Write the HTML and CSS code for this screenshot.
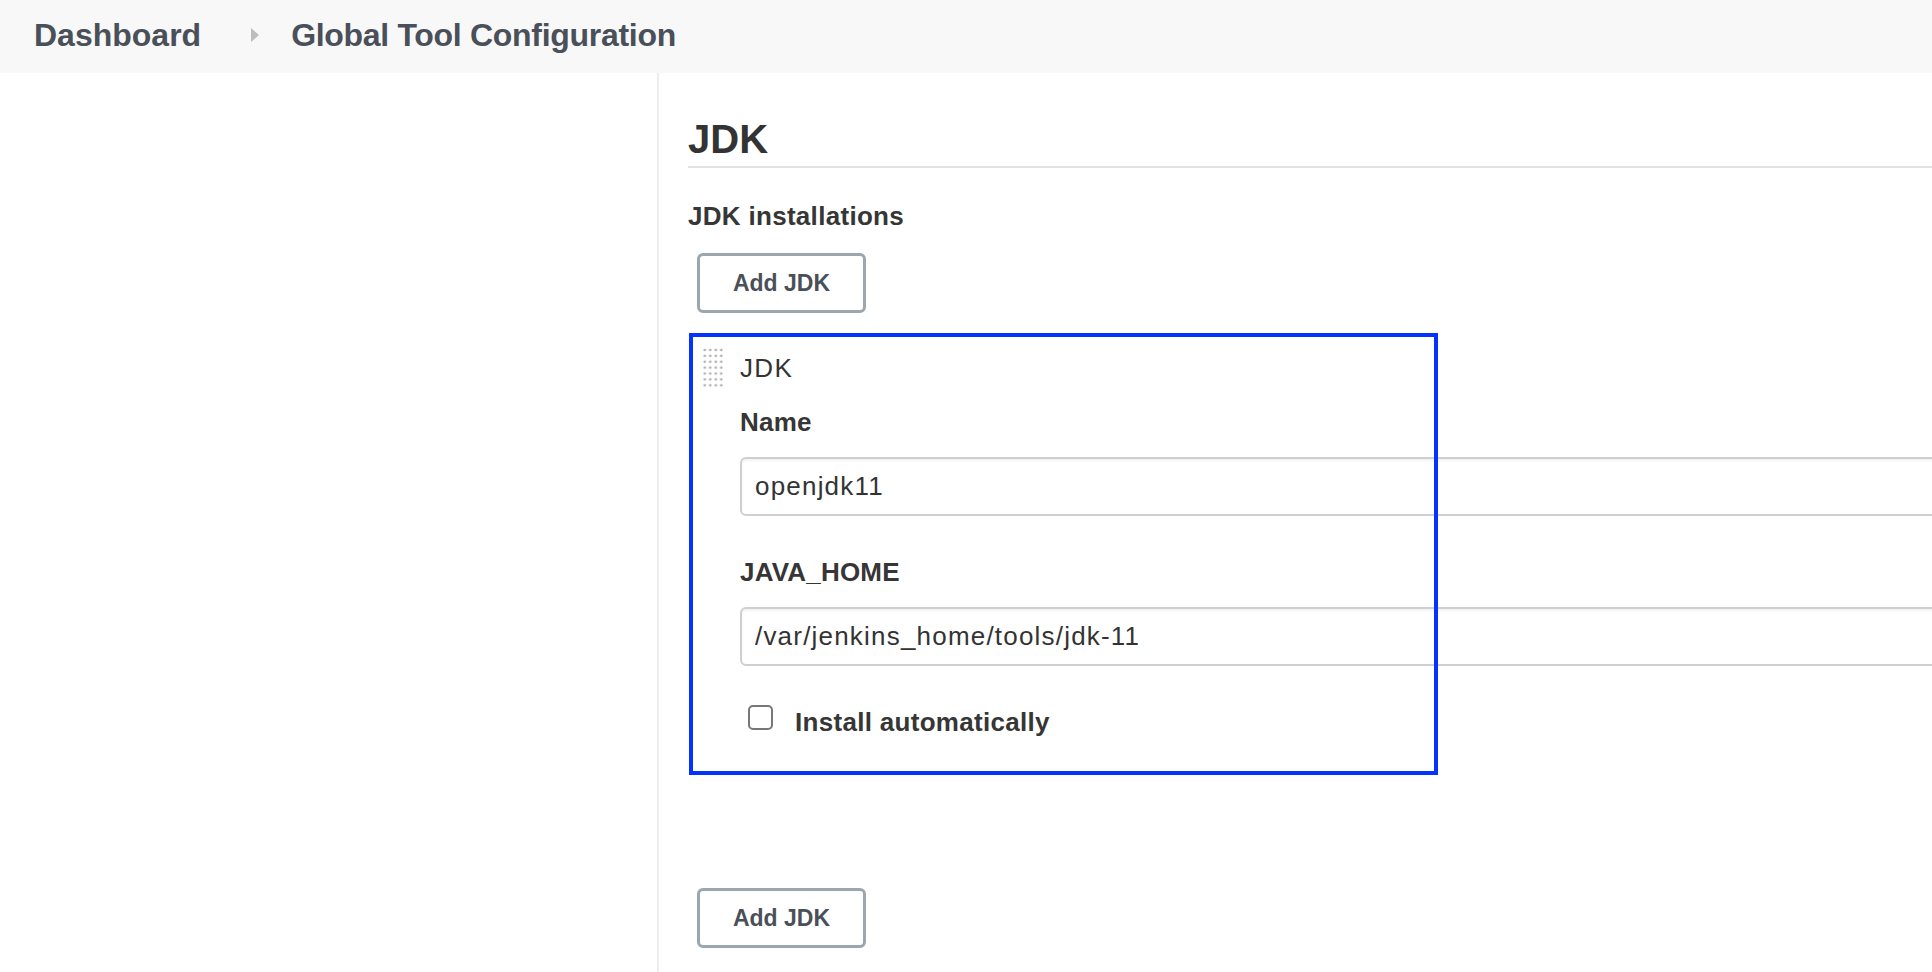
FILE: index.html
```html
<!DOCTYPE html>
<html lang="en">
<head>
<meta charset="utf-8">
<title>Global Tool Configuration</title>
<link rel="stylesheet" href="styles.css">
</head>
<body>
<header class="topbar">
  <span class="crumb">Dashboard</span>
  <span class="crumb-sep"></span>
  <span class="crumb crumb-current">Global Tool Configuration</span>
</header>
<div class="page">
  <aside class="side"></aside>
  <main class="content">
    <h2 class="section-title">JDK</h2>
    <div class="field-label">JDK installations</div>
    <button class="btn" type="button">Add JDK</button>
    <div class="chunk">
      <div class="handle"></div>
      <div class="chunk-body">
        <div class="chunk-title">JDK</div>
        <div class="label">Name</div>
        <input class="text-input" type="text" value="openjdk11">
        <div class="label label-spaced">JAVA_HOME</div>
        <input class="text-input" type="text" value="/var/jenkins_home/tools/jdk-11">
        <label class="check-row">
          <input class="cb" type="checkbox">
          <span class="check-text">Install automatically</span>
        </label>
      </div>
    </div>
    <button class="btn btn-bottom" type="button">Add JDK</button>
    <div class="help">List of JDK installations on this system</div>
  </main>
</div>
</body>
</html>
```

FILE: styles.css
```css
html, body {
  margin: 0;
  padding: 0;
}
body {
  background: #ffffff;
  font-family: "Liberation Sans", Arial, Helvetica, sans-serif;
  color: #333333;
  overflow: hidden;
  height: 972px;
}

.topbar {
  box-sizing: border-box;
  height: 73px;
  padding: 0 0 3px 34px;
  background: #f8f8f8;
  display: flex;
  align-items: center;
}
.crumb {
  font-size: 32px;
  line-height: 40px;
  font-weight: bold;
  color: #4a5059;
}
.crumb-current {
  letter-spacing: -0.3px;
}
.crumb-sep {
  width: 0;
  height: 0;
  border-left: 8px solid #bdbdbd;
  border-top: 7px solid transparent;
  border-bottom: 7px solid transparent;
  margin: 0 32px 0 50px;
}

.page {
  display: flex;
  height: 899px;
}
.side {
  flex: 0 0 657px;
  border-right: 2px solid #e9edf0;
}
.content {
  flex: 1;
  min-width: 0;
  padding-left: 29px;
}

.section-title {
  margin: 46px 0 0;
  padding-bottom: 7px;
  font-size: 40px;
  line-height: 40px;
  font-weight: bold;
  color: #333333;
  border-bottom: 2px solid #e2e2e2;
}

.field-label {
  margin-top: 32px;
  font-size: 26px;
  line-height: 32px;
  font-weight: bold;
  letter-spacing: 0.3px;
  color: #363636;
}

.btn {
  display: block;
  box-sizing: border-box;
  width: 169px;
  height: 60px;
  margin: 21px 0 0 9px;
  padding: 0;
  background: #ffffff;
  border: 3px solid #9ba6ae;
  border-radius: 6px;
  font-family: "Liberation Sans", Arial, sans-serif;
  font-size: 23px;
  font-weight: bold;
  color: #4a5059;
}
.btn-bottom {
  margin-top: 113px;
}

.chunk {
  position: relative;
  box-sizing: border-box;
  width: 749px;
  margin: 20px 0 0 1px;
  padding: 14px 0 37px 13px;
  display: flex;
  gap: 16px;
}
.chunk::after {
  content: "";
  position: absolute;
  inset: 0;
  border: 4px solid #0433ff;
  pointer-events: none;
  z-index: 2;
}
.handle {
  flex: 0 0 22px;
  height: 41px;
  background-image: radial-gradient(circle, #b0b0b0 1.2px, transparent 1.6px);
  background-size: 5.5px 5.9px;
  background-position: 0 0;
}
.chunk-body {
  flex: 1;
  min-width: 0;
}
.chunk-title {
  margin-top: 5px;
  font-size: 26px;
  line-height: 32px;
  letter-spacing: 1.3px;
  color: #333333;
}
.label {
  margin-top: 22px;
  font-size: 26px;
  line-height: 32px;
  font-weight: bold;
  letter-spacing: 0.2px;
  color: #363636;
}
.label-spaced {
  margin-top: 40px;
}
.text-input {
  display: block;
  box-sizing: border-box;
  width: 1250px;
  height: 59px;
  margin-top: 19px;
  padding: 0 13px;
  border: 2px solid #cfcfcf;
  border-radius: 6px;
  box-shadow: inset 0 2px 2px rgba(0, 0, 0, 0.05);
  background: #ffffff;
  font-family: "Liberation Sans", Arial, sans-serif;
  font-size: 26px;
  letter-spacing: 1.2px;
  color: #333333;
  outline: none;
}
.check-row {
  display: flex;
  align-items: flex-start;
  gap: 22px;
  margin-top: 40px;
}
.cb {
  appearance: none;
  -webkit-appearance: none;
  box-sizing: border-box;
  width: 25px;
  height: 25px;
  margin: -1px 0 0 8px;
  border: 2px solid #777777;
  border-radius: 5px;
  background: #ffffff;
  flex-shrink: 0;
}
.check-text {
  font-size: 26px;
  line-height: 32px;
  font-weight: bold;
  letter-spacing: 0.3px;
  color: #363636;
}
.help {
  margin-top: 19px;
  font-size: 22px;
  line-height: 28px;
  color: #c8c8c8;
}
```
